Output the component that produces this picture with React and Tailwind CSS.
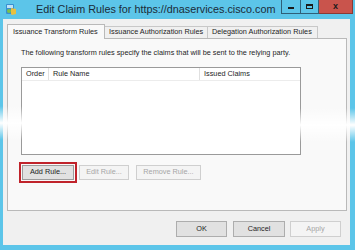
import React from "react";

const font = { fontFamily: '"Liberation Sans", Arial, sans-serif' };

function AppIcon() {
  return (
    <svg width="12" height="13" viewBox="0 0 12 13">
      <rect x="1" y="1" width="8" height="10" rx="1" fill="#3a8fd0" />
      <rect x="2" y="2" width="6" height="3" fill="#bfe3f7" />
      <path d="M6 5 L11 6 L11 11 L7 12 L6 11 Z" fill="#e8c040" />
      <circle cx="4" cy="8" r="2" fill="#7cc24a" />
    </svg>
  );
}

export default function App() {
  return (
    <div
      className="relative w-[355px] h-[250px] bg-[#5cc5e9] flex flex-col overflow-hidden"
      style={font}
    >
      {/* Title bar */}
      <div className="h-[19px] flex items-start shrink-0">
        <div className="pl-[5px] pt-[3px]">
          <AppIcon />
        </div>
        <div className="ml-[19px] mt-[2px] text-[10.8px] leading-[14px] text-[#1b2b38] whitespace-nowrap">
          Edit Claim Rules for https://dnaservices.cisco.com
        </div>
        <div className="ml-auto mr-[2px] flex">
          <div className="w-[20px] h-[14px] border border-[#2f5f78] border-t-0 flex items-center justify-center">
            <div className="w-[6px] h-[2px] bg-[#1b1b1b] mt-[2px]" />
          </div>
          <div className="w-[18px] h-[14px] border-b border-r border-[#2f5f78] flex items-center justify-center">
            <div className="w-[7px] h-[5px] border border-[#1b1b1b] border-t-2" />
          </div>
          <div className="w-[34px] h-[14px] bg-[#c9544c] border-b border-r border-[#8a3a35] flex items-center justify-center text-[9px] font-bold text-[#1b1b1b] leading-none">
            x
          </div>
        </div>
      </div>

      {/* Client area */}
      <div className="flex-1 ml-[3px] mr-[5px] mb-[5px] bg-[#f0f0f0] flex flex-col pl-[4px] pr-[3px] pt-[5px]">
        {/* Tabs */}
        <div className="flex items-end h-[14px] text-[7.3px] text-[#1e1e1e]">
          <div className="relative z-10 w-[98px] h-[15px] -mb-[1px] bg-[#f9f9f9] border border-b-0 border-[#b9b9b9] flex items-center pl-[5px] whitespace-nowrap">
            Issuance Transform Rules
          </div>
          <div className="w-[103px] h-[12px] bg-[#f0f0f0] border border-l-0 border-b-0 border-[#c8c8c8] flex items-center pl-[4px] whitespace-nowrap">
            Issuance Authorization Rules
          </div>
          <div className="w-[110px] h-[12px] bg-[#f0f0f0] border border-l-0 border-b-0 border-[#c8c8c8] flex items-center pl-[4px] whitespace-nowrap">
            Delegation Authorization Rules
          </div>
        </div>

        {/* Tab panel */}
        <div className="h-[173px] bg-[#f9f9f9] border border-[#b9b9b9] pl-[13px] pt-[9px] flex flex-col">
          <div className="text-[7.3px] leading-[9px] text-[#1e1e1e] whitespace-nowrap">
            The following transform rules specify the claims that will be sent to the relying party.
          </div>

          {/* List */}
          <div className="mt-[10px] w-[280px] h-[88px] bg-white border border-[#9a9a9a] flex flex-col">
            <div className="h-[13px] flex text-[7.3px] text-[#1e1e1e] border-b border-[#ececec]">
              <div className="w-[27px] border-r border-[#e0e0e0] pl-[4px] flex items-center">Order</div>
              <div className="w-[151px] border-r border-[#e0e0e0] pl-[4px] flex items-center">Rule Name</div>
              <div className="flex-1 pl-[4px] flex items-center">Issued Claims</div>
            </div>
          </div>

          {/* Rule buttons */}
          <div className="mt-[7px] flex items-center text-[7.3px]">
            <div className="-ml-[2px] border-2 border-[#c0232b] p-[1px]">
              <div className="w-[52px] h-[15px] bg-[#e1e1e1] border border-[#9c9c9c] flex items-center justify-center text-[#1e1e1e]">
                Add Rule...
              </div>
            </div>
            <div className="ml-[2px] w-[50px] h-[15px] bg-[#f4f4f4] border border-[#cfcfcf] flex items-center justify-center text-[#a6a6a6]">
              Edit Rule...
            </div>
            <div className="ml-[7px] w-[65px] h-[15px] bg-[#f4f4f4] border border-[#cfcfcf] flex items-center justify-center text-[#a6a6a6]">
              Remove Rule...
            </div>
          </div>
        </div>

        {/* Dialog buttons */}
        <div className="mt-[10px] flex justify-end pr-[6px] text-[7.3px]">
          <div className="w-[51px] h-[16px] bg-[#e1e1e1] border border-[#adadad] flex items-center justify-center text-[#1e1e1e]">
            OK
          </div>
          <div className="ml-[6px] w-[52px] h-[16px] bg-[#e1e1e1] border border-[#adadad] flex items-center justify-center text-[#1e1e1e]">
            Cancel
          </div>
          <div className="ml-[5px] w-[51px] h-[16px] bg-[#f4f4f4] border border-[#cfcfcf] flex items-center justify-center text-[#a6a6a6]">
            Apply
          </div>
        </div>
      </div>

      {/* Torn-edge fades */}
      <div className="absolute left-0 top-[106px] w-[24px] h-[34px] bg-gradient-to-b from-transparent via-white to-transparent" />
      <div className="absolute right-0 top-[108px] w-[55px] h-[34px] bg-gradient-to-b from-transparent via-white to-transparent" />
    </div>
  );
}
